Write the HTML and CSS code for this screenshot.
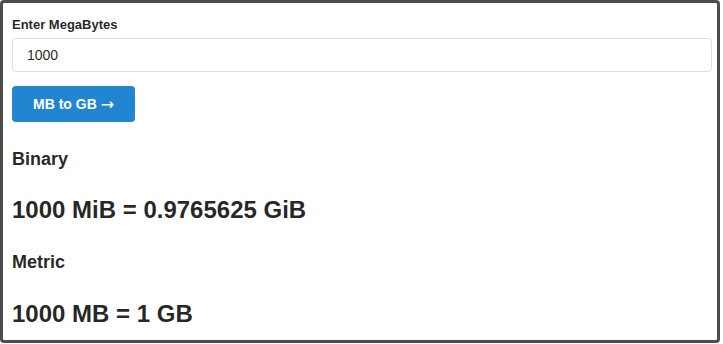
FILE: index.html
```html
<!DOCTYPE html>
<html>
<head>
<meta charset="utf-8">
<link rel="stylesheet" href="styles.css">
</head>
<body>
<div class="frame">
  <form class="form">
    <label class="label" for="mb">Enter MegaBytes</label>
    <input class="input" id="mb" type="text" value="1000">
    <button class="btn" type="button">MB to GB <span class="arrow">→</span></button>
  </form>
  <h4 class="heading">Binary</h4>
  <h2 class="result">1000 MiB = 0.9765625 GiB</h2>
  <h4 class="heading heading-2">Metric</h4>
  <h2 class="result result-2">1000 MB = 1 GB</h2>
</div>
</body>
</html>
```

FILE: styles.css
```css
html, body {
  margin: 0;
  padding: 0;
  background: #ffffff;
}
body {
  font-family: "Liberation Sans", Arial, sans-serif;
  color: rgba(0, 0, 0, 0.87);
}
.frame {
  box-sizing: border-box;
  width: 720px;
  height: 343px;
  border: 3px solid #4d4d4d;
  border-radius: 4px;
  padding: 14px 5px 0 9px;
  display: flex;
  flex-direction: column;
  align-items: stretch;
}
.form {
  display: flex;
  flex-direction: column;
  align-items: flex-start;
  margin: 0;
}
.label {
  font-size: 13px;
  line-height: 16px;
  font-weight: 700;
  height: 16px;
}
.input {
  box-sizing: border-box;
  margin-top: 5px;
  width: 700px;
  height: 34px;
  border: 1px solid #dedede;
  border-radius: 4px;
  padding: 0 14px;
  font-family: "Liberation Sans", Arial, sans-serif;
  font-size: 14px;
  color: rgba(0, 0, 0, 0.87);
  outline: none;
}
.btn {
  box-sizing: border-box;
  margin-top: 14px;
  height: 36px;
  padding: 0 21px 0 21px;
  border: 0;
  border-radius: 4px;
  background: #2185d0;
  color: #ffffff;
  font-family: "Liberation Sans", Arial, sans-serif;
  font-size: 14px;
  font-weight: 700;
  line-height: 36px;
}
.arrow {
  font-family: "DejaVu Sans", sans-serif;
  font-weight: 400;
  font-size: 16px;
  line-height: 1;
  position: relative;
  top: 1px;
}
.heading {
  margin: 27px 0 0;
  font-size: 18px;
  line-height: 20px;
  font-weight: 700;
}
.heading-2 {
  margin-top: 28px;
}
.result {
  margin: 27px 0 0;
  font-size: 24px;
  line-height: 28px;
  font-weight: 700;
}
.result-2 {
  margin-top: 28px;
}
```
